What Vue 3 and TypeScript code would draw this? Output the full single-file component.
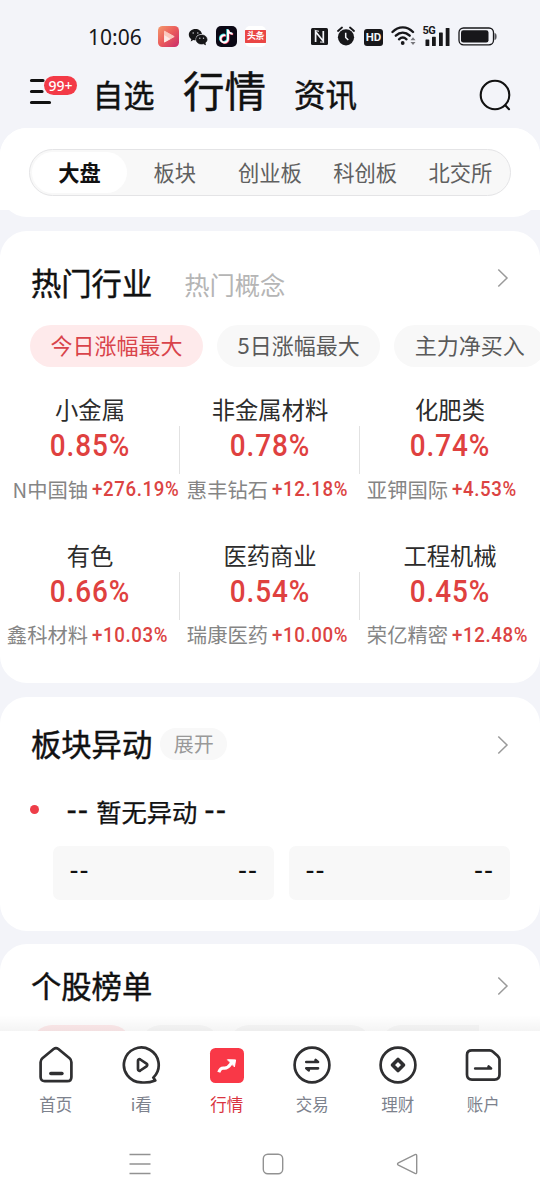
<script setup lang="ts">
interface Sector { name: string; pct: string; stock: string; change: string }

const markets: string[] = ['大盘', '板块', '创业板', '科创板', '北交所']
const filters: string[] = ['今日涨幅最大', '5日涨幅最大', '主力净买入']
const sectors: Sector[] = [
  { name: '小金属', pct: '0.85%', stock: 'N中国铀', change: '+276.19%' },
  { name: '非金属材料', pct: '0.78%', stock: '惠丰钻石', change: '+12.18%' },
  { name: '化肥类', pct: '0.74%', stock: '亚钾国际', change: '+4.53%' },
  { name: '有色', pct: '0.66%', stock: '鑫科材料', change: '+10.03%' },
  { name: '医药商业', pct: '0.54%', stock: '瑞康医药', change: '+10.00%' },
  { name: '工程机械', pct: '0.45%', stock: '荣亿精密', change: '+12.48%' },
]
</script>

<template>
  <div class="app">
    <div class="status">
      <span class="time">10:06</span>
      <svg class="s-play" width="21" height="21" viewBox="0 0 21 21">
        <defs>
          <linearGradient id="playBg" x1="0" y1="0" x2="1" y2="1">
            <stop offset="0" stop-color="#f49a6c" /><stop offset=".5" stop-color="#ea5a5c" /><stop offset="1" stop-color="#c92a6c" />
          </linearGradient>
        </defs>
        <rect width="21" height="21" rx="4.5" fill="url(#playBg)" />
        <path d="M6.5 5.2 L16.2 10.6 L6.5 16 Z" fill="#fbc9be" stroke="#fbc9be" stroke-width="1" stroke-linejoin="round" />
        <path d="M6.2 9 L12.5 13 L6.2 16.4 Z" fill="#fff" opacity=".6" />
      </svg>
      <svg class="s-wechat" width="20" height="18" viewBox="0 0 20 18">
        <path d="M7.5 1 C3.6 1 .8 3.5 .8 6.7 c0 1.9 1 3.4 2.5 4.5 L2.7 13.4 5.3 12 c.7.2 1.5.3 2.3.3 C7.2 8.6 9.8 6 14 6 C13.4 3 10.700 1 7.500 1Z" fill="#151517" />
        <path d="M13.600 6.900 c-3.200 0-5.500 2-5.500 4.600 s2.300 4.600 5.500 4.600 c.7 0 1.300-.1 1.900-.3 l2.100 1.100-.5-1.900 c1.200-.9 2-2.100 2-3.500 0-2.600-2.400-4.600-5.500-4.600Z" fill="#151517" stroke="#151517" stroke-width=".6" />
        <g fill="#c9cace"><circle cx="5.200" cy="5" r=".8" /><circle cx="9.800" cy="5" r=".8" /><circle cx="11.800" cy="10.200" r=".7" /><circle cx="15.500" cy="10.200" r=".7" /></g>
      </svg>
      <svg class="s-tik" width="21" height="21" viewBox="0 0 21 21">
        <rect width="21" height="21" rx="5" fill="#0b0815" />
        <g fill="none" stroke-width="1.900">
          <path transform="translate(-.8 -.6)" stroke="#35d5da" d="M9.500 9.300 a3.700 3.700 0 1 0 2.500 3.500 V3.600 c.3 2.500 1.900 4 4.600 4.100" />
          <path transform="translate(.6 .6)" stroke="#ee3a5c" d="M9.500 9.300 a3.700 3.700 0 1 0 2.500 3.500 V3.600 c.3 2.500 1.900 4 4.600 4.100" />
          <path stroke="#fff" d="M9.500 9.300 a3.700 3.700 0 1 0 2.500 3.500 V3.600 c.3 2.500 1.900 4 4.600 4.100" />
        </g>
      </svg>
      <span class="toutiao"><b>头条</b></span>

      <svg class="s-nfc" width="17" height="17" viewBox="0 0 17 17">
        <rect width="17" height="17" rx="1.500" fill="#17171a" />
        <path d="M4.600 14 V3.600 L12.300 13.200 V3" fill="none" stroke="#f3f4f9" stroke-width="1.700" />
        <path d="M4.300 2.500 L8 3.300 M9 14 L12.700 14.200" stroke="#f3f4f9" stroke-width="1" />
      </svg>
      <svg class="s-alarm" width="18" height="20" viewBox="0 0 18 20">
        <circle cx="9" cy="11.300" r="8.100" fill="#17171a" />
        <path d="M1 5 L5 1.500 M17 5 L13 1.500" stroke="#17171a" stroke-width="1.800" stroke-linecap="round" />
        <path d="M8.700 6.800 V11.500 L11.300 14" fill="none" stroke="#f3f4f9" stroke-width="1.500" />
      </svg>
      <span class="hd">HD</span>
      <svg class="s-wifi" width="26" height="20" viewBox="0 0 26 20">
        <g fill="none" stroke="#17171a" stroke-width="2.400" stroke-linecap="round">
          <path d="M1.500 6 C7.500 -.2 16 -.2 22 6" /><path d="M4.800 9.700 C9 5.700 14.500 5.700 18.700 9.700" /><path d="M8 13.300 C10.300 11.200 13.200 11.200 15.500 13.300" />
        </g>
        <circle cx="11.700" cy="17" r="1.900" fill="#17171a" />
        <path d="M19.500 14.300 L22 11.300 L24.500 14.300Z M19.500 16 L22 19 L24.500 16Z" fill="#77777c" />
      </svg>
      <span class="signal">
        <i>5G</i>
        <svg width="27" height="19" viewBox="0 0 27 19" fill="#17171a">
          <rect x="2.500" y="12.500" width="3.800" height="6.500" rx=".6" /><rect x="9" y="9.800" width="3.800" height="9.200" rx=".6" />
          <rect x="16" y="5.500" width="3.800" height="13.500" rx=".6" /><rect x="22.700" y="1" width="3.800" height="18" rx=".6" />
        </svg>
      </span>
      <svg class="s-bat" width="39" height="19" viewBox="0 0 39 19">
        <rect x="1" y="1" width="34.500" height="16.800" rx="4.500" fill="none" stroke="#17171a" stroke-width="1.300" />
        <rect x="3" y="3.200" width="27.500" height="12.300" rx="2.300" fill="#17171a" />
        <path d="M37 6.500 C38.500 7 38.500 12 37 12.500Z" fill="#55555a" stroke="#55555a" />
      </svg>
    </div>

    <header class="head">
      <span class="menu">
        <svg width="24" height="28" viewBox="0 0 24 28" stroke="#111" stroke-width="3.200" stroke-linecap="round">
          <path d="M2.500 2.500 H14 M2.500 13.500 H13 M2.500 24.500 H20.500" />
        </svg>
        <em class="badge">99+</em>
      </span>
      <span class="h-a">自选</span>
      <span class="h-b">行情</span>
      <span class="h-c">资讯</span>
      <svg class="search" width="34" height="34" viewBox="0 0 34 34" fill="none" stroke="#111" stroke-width="2.100" stroke-linecap="round">
        <circle cx="17" cy="17" r="14.300" /><path d="M27.500 27.500 L31 31.200" />
      </svg>
    </header>

    <div class="first">
      <section class="card market">
        <nav class="seg">
          <span v-for="(m, i) in markets" :key="m" :class="{ on: i === 0 }">{{ m }}</span>
        </nav>
      </section>
    </div>

    <section class="card hot">
      <div class="title-row hot-title">
        <h2>热门行业</h2><span class="sub">热门概念</span>
        <svg class="chev" width="12" height="20" viewBox="0 0 12 20"><path d="M1.300 1.500 L10 10 L1.300 18.500" /></svg>
      </div>
      <div class="chips">
        <span v-for="(f, i) in filters" :key="f" :class="{ on: i === 0 }">{{ f }}</span>
      </div>
      <div class="grid">
        <div v-for="s in sectors" :key="s.name" class="cell">
          <div class="name">{{ s.name }}</div>
          <div class="pct">{{ s.pct }}</div>
          <div class="lead"><span class="stock">{{ s.stock }}</span><span class="chg">{{ s.change }}</span></div>
        </div>
      </div>
    </section>

    <section class="card move">
      <div class="title-row">
        <h2>板块异动</h2><span class="expand">展开</span>
        <svg class="chev" width="12" height="20" viewBox="0 0 12 20"><path d="M1.300 1.500 L10 10 L1.300 18.500" /></svg>
      </div>
      <div class="none"><i class="dot"></i><span class="dash">--</span><span class="msg">暂无异动</span><span class="dash">--</span></div>
      <div class="boxes">
        <div v-for="n in 2" :key="n" class="box"><span>--</span><span>--</span></div>
      </div>
    </section>

    <section class="card rank">
      <div class="title-row">
        <h2>个股榜单</h2>
        <svg class="chev" width="12" height="20" viewBox="0 0 12 20"><path d="M1.300 1.500 L10 10 L1.300 18.500" /></svg>
      </div>
      <div class="rank-chips"><i class="c1"></i><i class="c2"></i><i class="c3"></i><i class="c4"></i></div>
      <div class="fade"></div>
    </section>

    <footer class="foot">
      <nav class="tabs">
        <div class="tab">
          <svg width="40" height="40" viewBox="0 0 40 40">
            <path d="M4.600 17.200 C4.600 15.500 5.200 14.300 6.400 13.300 L17.600 4 C19.200 2.800 20.800 2.800 22.400 4 L33.600 13.300 C34.800 14.300 35.400 15.500 35.400 17.200 V32 C35.400 34.700 33.900 36.200 31.200 36.200 H8.800 C6.100 36.200 4.600 34.700 4.600 32Z" />
            <path d="M14.800 28.500 H26" class="bar" />
          </svg>
          <span>首页</span>
        </div>
        <div class="tab">
          <svg width="40" height="40" viewBox="0 0 40 40">
            <path d="M33 31.800 A17.400 17.400 0 1 0 20 37.300 C24.500 37.800 29 37.500 34.300 35.400 L32.300 32.500" />
            <path d="M17 15.800 C17 14.400 18.200 13.800 19.300 14.500 L25.500 18.700 C26.500 19.400 26.500 20.600 25.500 21.300 L19.300 25.500 C18.200 26.200 17 25.600 17 24.200Z" />
          </svg>
          <span>i看</span>
        </div>
        <div class="tab on">
          <svg width="40" height="40" viewBox="0 0 40 40">
            <rect x="3" y="3" width="34" height="35" rx="5.500" class="solid" />
            <path d="M11.800 27.300 C13.600 22.300 15.400 23.200 17.500 23.200 C21.800 23.300 22.500 20.300 25 17.300" class="trend" />
            <path d="M20.800 14.700 L28.600 14.900 L27.500 21.500Z" class="white" />
          </svg>
          <span>行情</span>
        </div>
        <div class="tab">
          <svg width="40" height="40" viewBox="0 0 40 40">
            <circle cx="20" cy="20" r="17.400" />
            <path d="M14.300 17 H26 L23.600 15 V17 M26 23.300 H14.300 L16.700 25.300 V23.300" />
          </svg>
          <span>交易</span>
        </div>
        <div class="tab">
          <svg width="40" height="40" viewBox="0 0 40 40">
            <circle cx="20" cy="20" r="17.400" />
            <path d="M20 14.500 L25.500 20 L20 25.500 L14.500 20Z" class="gem" />
          </svg>
          <span>理财</span>
        </div>
        <div class="tab">
          <svg width="40" height="40" viewBox="0 0 40 40">
            <path d="M4 10 C4 6.800 6 5.400 9 5.400 H26.500 C28 5.400 29 5.700 30 6.700 L34.500 10.800 C35.700 12 36.500 12.800 36.500 14.500 V29.500 C36.500 32.800 34.500 34.600 31.500 34.600 H9 C6 34.600 4 32.800 4 29.500Z" />
            <path d="M12.200 23.500 H28 L25.600 21.500 V23.500" />
          </svg>
          <span>账户</span>
        </div>
      </nav>
      <div class="sys">
        <svg width="22" height="22" viewBox="0 0 22 22"><path d="M.5 1.500 H21.500 M.5 11 H21.500 M.5 20.500 H21.500" /></svg>
        <svg width="22" height="22" viewBox="0 0 22 22"><rect x="1.300" y="1.300" width="19.400" height="19.400" rx="4.500" /></svg>
        <svg width="22" height="22" viewBox="0 0 22 22"><path d="M19 1.600 C20.200 1.100 20.700 1.700 20.700 2.800 V19.200 C20.700 20.300 20.200 20.900 19 20.400 L2.400 12.200 C1.200 11.500 1.200 10.500 2.400 9.800Z" /></svg>
      </div>
    </footer>
  </div>
</template>

<style>
body { margin: 0; background: #f3f4f9; }
</style>

<style scoped>
.app {
  width: 540px; height: 1200px; overflow: hidden; background: #f3f4f9; color: #111;
  font-family: "Noto Sans CJK SC", sans-serif; white-space: nowrap;
  display: flex; flex-direction: column; box-sizing: border-box;
}
svg { display: block; flex: none; }
.status { height: 62px; flex: none; display: flex; align-items: center; padding: 11px 0 0 88px; box-sizing: border-box; }
.time { font: 21px/26px "Noto Sans", sans-serif; width: 70px; color: #17171a; }
.s-wechat { margin-left: 9px; }
.s-tik { margin-left: 8px; }
.toutiao { margin-left: 8px; width: 21px; height: 21px; border-radius: 5px; background: #fff; display: flex; align-items: center; overflow: hidden; }
.toutiao b { width: 21px; height: 13px; background: #ea4645; color: #fff; font-size: 9px; line-height: 12px; text-align: center; letter-spacing: -.500px; }
.s-nfc { margin-left: 45px; }
.s-alarm { margin-left: 9px; margin-top: -1px; }
.hd { margin-left: 9px; width: 19px; height: 17px; border-radius: 3px; background: #17171a; color: #f3f4f9; font: 700 11.500px/17px Roboto, sans-serif; text-align: center; margin-top: 1px; }
.s-wifi { margin-left: 8px; margin-top: -2px; }
.signal { margin-left: 5.500px; width: 27px; height: 19px; position: relative; margin-top: -1px; }
.signal i { position: absolute; left: 0; top: -1px; font: 700 11px/10px Roboto, sans-serif; color: #17171a; background: #f3f4f9; letter-spacing: -.600px; }
.s-bat { margin-left: 8px; }

.head { height: 66px; flex: none; display: flex; align-items: baseline; position: relative; padding-left: 29px; box-sizing: border-box; -webkit-text-stroke: .450px currentColor; }
.menu { width: 63.500px; align-self: flex-start; position: relative; padding-top: 15.500px; }
.badge { position: absolute; left: 15px; top: 14px; height: 19px; width: 33px; border-radius: 10px; background: #f33a47; color: #fff; font: 500 14px/19px "Noto Sans", sans-serif; text-align: center; -webkit-text-stroke: 0; }
.h-a { font-size: 31px; line-height: 55px; }
.h-b { font-size: 41.500px; line-height: 55px; margin-left: 28.500px; }
.h-c { font-size: 31.500px; line-height: 55px; margin-left: 28px; }
.search { align-self: flex-start; margin: 16px 0 0 121px; }

.card { background: #fff; border-radius: 27px; flex: none; position: relative; }
.first { flex: none; border-radius: 27px 27px 0 0; background: linear-gradient(#fff 82px, transparent 82px); margin-bottom: 14px; }
.market { height: 89px; padding: 21px 29px 0; box-sizing: border-box; }
.seg { height: 47px; border: 1px solid #e4e4e6; border-radius: 24px; background: #f8f8f8; box-sizing: border-box; padding: 2px 2px; display: flex; color: #606060; }
.seg span { font-size: 21.300px; line-height: 39px; height: 41px; width: 95.200px; text-align: center; flex: none; }
.seg .on { color: #111; font-weight: 700; background: #fff; border-radius: 21px; }

.title-row { display: flex; align-items: center; padding-left: 31px; position: relative; }
h2 { margin: 0; font-size: 30.300px; line-height: 43px; height: 44px; font-weight: 400; -webkit-text-stroke: .450px currentColor; }
.chev { margin-left: auto; margin-right: 31px; fill: none; stroke: #9a9a9a; stroke-width: 1.500; }
.hot { height: 452px; margin-bottom: 14px; overflow: hidden; }
.hot-title { padding-top: 30px; height: 44px; }
.hot-title .chev { margin-top: -10px; }
.sub { font-size: 25.300px; line-height: 44px; color: #b5b5b5; margin-left: 32px; padding-top: 1px; }
.chips { display: flex; gap: 14px; padding-left: 30px; margin-top: 20px; }
.chips span { height: 42px; border-radius: 21px; line-height: 39px; font-size: 22px; padding: 0 20.500px; background: #f8f8f8; color: #5a5a5a; flex: none; }
.chips .on { background: #feeaeb; color: #d9434a; }
.grid { display: grid; grid-template-columns: repeat(3, 180px); grid-auto-rows: 145.500px; margin-top: 25px; }
.cell { position: relative; text-align: center; }
.cell:not(:nth-child(3n))::after { content: ""; position: absolute; right: 0; top: 34px; width: 1px; height: 48px; background: #e2e2e2; }
.name { font-size: 23.300px; line-height: 35px; height: 34px; color: #2c2c2c; }
.pct { font: 500 31px/39px Roboto, sans-serif; height: 40px; letter-spacing: 1px; transform: scaleX(.900); color: #df413f; }
.lead { display: flex; align-items: center; height: 40px; margin-top: 3px; padding-left: 6px; }
.stock { width: 82px; flex: none; text-align: right; font-size: 20.300px; line-height: 30px; height: 31px; color: #858585; }
.chg { flex: none; font: 500 20.500px/30px Roboto, sans-serif; letter-spacing: .700px; transform: scaleX(.910); transform-origin: 0 50%; color: #dc4342; margin-left: 3.500px; }

.move { height: 234px; margin-bottom: 13px; }
.move .title-row { padding-top: 25px; height: 44px; }
.move .chev { margin-top: 2px; }
.expand { margin-left: 8px; width: 67px; height: 32px; border-radius: 16px; background: #f8f8f8; color: #999; font-size: 20px; line-height: 32px; text-align: center; }
.none { display: flex; align-items: center; height: 36px; margin-top: 27px; padding-left: 30px; font-size: 25.300px; line-height: 36px; -webkit-text-stroke: .250px currentColor; }
.dot { width: 9px; height: 9px; border-radius: 50%; background: #ee3d48; margin: -4px 27.500px 0 0; }
.dash { font-family: "Liberation Sans", sans-serif; font-size: 31px; letter-spacing: 1px; margin-top: -2px; }
.msg { margin: 0 7px 0 7px; }
.boxes { display: flex; gap: 15px; margin-top: 17px; padding-left: 52.500px; }
.box { width: 221px; height: 54px; border-radius: 7px; background: #f8f8f8; box-sizing: border-box; padding: 0 15.500px 0 17px; display: flex; justify-content: space-between; font: 27px/48px "Liberation Sans", sans-serif; letter-spacing: 1px; }

.rank { height: 87px; overflow: hidden; border-radius: 27px 27px 0 0; }
.rank .title-row { padding-top: 20px; height: 44px; }
.rank-chips { display: flex; margin: 17px 61px 0 32px; height: 41px; overflow: hidden; gap: 10px; }
.rank-chips i { height: 41px; border-radius: 20px; background: #f8f8f8; flex: none; }
.rank-chips .c1 { width: 99px; background: #feeaeb; }
.rank-chips .c2 { width: 78px; }
.rank-chips .c3 { width: 142px; }
.rank-chips .c4 { width: 140px; }
.fade { position: absolute; left: 0; right: 0; bottom: 0; height: 16px; background: linear-gradient(rgba(0,0,0,0), rgba(0,0,0,.045)); }

.foot { flex: none; height: 169px; background: #fff; }
.tabs { display: flex; padding: 14px 13.500px 0 13px; }
.tab { width: 85.500px; display: flex; flex-direction: column; align-items: center; color: #7d828d; font-size: 16.500px; line-height: 24px; }
.tab svg { fill: none; stroke: #2f2f31; stroke-width: 2.700; stroke-linecap: round; stroke-linejoin: round; }
.tab span { margin-top: 6.500px; }
.tab .bar { stroke-width: 3.400; }
.tab .solid { fill: #f93847; stroke: none; }
.tab .white { fill: #fff; stroke: #fff; stroke-width: 1; }
.tab .trend { stroke: #fff; stroke-width: 3.200; stroke-linecap: butt; }
.tab .gem { stroke-width: 3.600; }
.tab.on { color: #d93440; }
.sys { display: flex; gap: 111.500px; padding: 37px 0 0 128.500px; }
.sys svg { fill: none; stroke: #929292; stroke-width: 1.400; }
</style>
